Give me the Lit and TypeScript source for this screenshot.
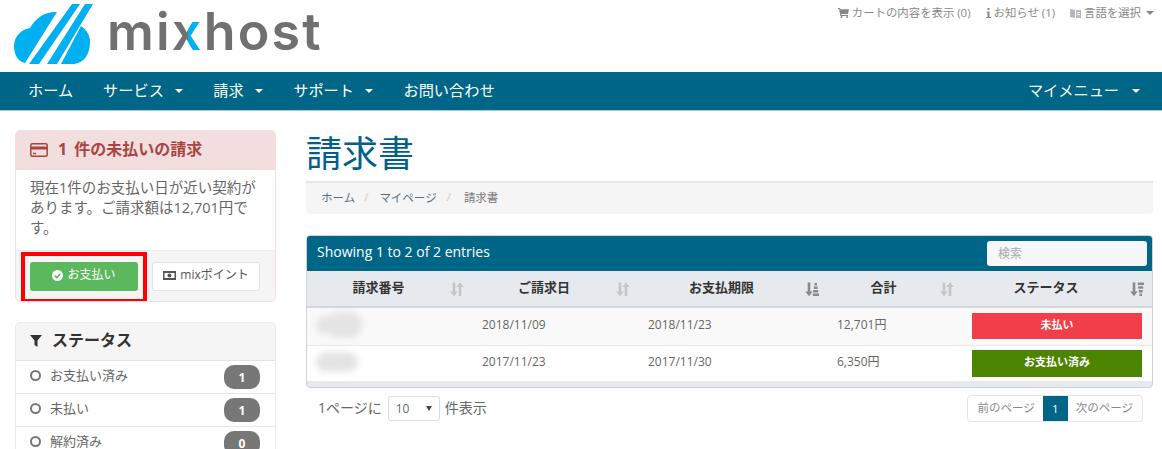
import { LitElement, html, css, svg } from "lit";
import { customElement } from "lit/decorators.js";

const caret = html`<i class="caret"></i>`;

const sortBoth = svg`<path d="M2.700 1.500h2.600v9h2.400L4 15.200.3 10.500h2.400z"/><path d="M11.300 15h-2.600V6H6.300L10 1.300 13.700 6h-2.400z"/>`;
const sortAsc = svg`<path d="M2.700 1.500h2.600v9h2.400L4 15.200.3 10.500h2.400z"/><path d="M9.500 2h2.500v2.500H9.500zM8.800 5.500h3.900v2.500H8.800zM8.200 9h5v2.500h-5zM7.800 12.500h6.200V15H7.800z"/>`;
const sortDesc = svg`<path d="M2.700 1.500h2.600v9h2.400L4 15.200.3 10.500h2.400z"/><path d="M7.800 1.500H14V4H7.800zM8.200 5.200h5v2.500h-5zM8.800 8.900h3.900v2.500H8.800zM9.500 12.500H12V15H9.500z"/>`;

@customElement("app-root")
export class AppRoot extends LitElement {
  static styles = css`
    :host {
      display: block;
      width: 1162px;
      height: 449px;
      overflow: hidden;
      background: #fff;
      font-family: "Open Sans", "Noto Sans CJK JP", sans-serif;
      font-size: 13px;
      color: #666;
    }
    * { box-sizing: border-box; }
    .top { height: 72px; display: flex; justify-content: space-between; align-items: flex-start; padding: 0 8px 0 14px; }
    .logo { display: flex; align-items: flex-start; padding-top: 2px; gap: 13px; }
    .logo svg { display: block; }
    .word { font-family: "Inter", sans-serif; font-weight: 600; font-size: 52px; line-height: 60px; letter-spacing: 2.2px; color: #707070; }
    .word b { font-weight: 600; background: linear-gradient(90deg, #707070 50%, #00b0f0 50%); -webkit-background-clip: text; background-clip: text; color: transparent; }
    .tools { display: flex; gap: 15px; font-size: 11.4px; line-height: 16px; color: #888; padding-top: 5px; }
    .tools span { display: flex; align-items: center; gap: 3px; }
    .tools svg { fill: #888; display: block; }
    .tools .caret { border-top-color: #888; margin-left: 2px; }

    .caret { display: inline-block; width: 0; height: 0; border-left: 4px solid transparent; border-right: 4px solid transparent; border-top: 4px solid #fff; }
    nav { height: 39px; background: #006687; color: #fff; display: flex; align-items: center; padding: 0 13px 5px; font-size: 15.2px; border-bottom: 1px solid #a9c9d6; }
    nav a { padding: 0 15px; display: flex; align-items: center; gap: 11.5px; }
    nav a .caret { margin-top: 4px; }
    nav .push { margin-left: auto; gap: 13px; margin-right: -6px; }

    .page { display: flex; gap: 30px; padding: 19px 9px 0 15px; align-items: flex-start; }
    aside { width: 261px; flex: none; display: flex; flex-direction: column; gap: 20px; }
    main { flex: 1; min-width: 0; }

    .panel { border: 1px solid #ebebeb; border-radius: 5px; overflow: hidden; }
    .panel.bad { border-color: #f2dede; }
    .ph { height: 39px; display: flex; align-items: center; padding: 0 0 6px 14px; font-size: 16px; font-weight: 700; gap: 10px; word-spacing: 3px; }
    .ph svg { margin-top: 5px; }
    .bad .ph { background: #f2dede; color: #a94442; }
    .pb { padding: 8px 14px 0; height: 80px; font-size: 14.5px; line-height: 20px; color: #666; }
    .pf { height: 51px; background: #f5f5f5; border-top: 1px solid #ebebeb; display: flex; align-items: center; padding-left: 14px; gap: 14px; }
    .btn { width: 108px; height: 29px; display: flex; align-items: center; justify-content: center; gap: 4px; border-radius: 3px; font-size: 12px; padding-bottom: 5px; }
    .btn svg { margin-top: 3px; }
    .btn.go { background: #5cb85c; color: #fff; }
    .btn.mix { background: #fff; border: 1px solid #e3e3e3; color: #555; }
    .hl { position: relative; display: block; }
    .hl::after { content: ""; position: absolute; left: -9px; right: -9px; top: -10px; bottom: -12px; border: 4px solid #f00; }

    .side-h { height: 38px; background: #f5f5f5; border-bottom: 1px solid #e3e3e3; display: flex; align-items: center; padding: 0 0 6px 14px; font-size: 16px; font-weight: 700; color: #333; gap: 10px; }
    .side-h svg { margin-top: 5px; }
    .opt { height: 33px; display: flex; align-items: center; padding: 0 15px 0 14px; border-bottom: 1px solid #e8e8e8; font-size: 13px; color: #666; }
    .opt em { font-style: normal; margin-top: -5px; }
    .opt .dot { width: 11px; height: 11px; border-radius: 50%; border: 2px solid #777; margin: -4px 9px 0 0; }
    .opt .n { margin-left: auto; width: 36px; height: 24px; border-radius: 10px; background: #777; color: #fff; font-size: 12px; font-weight: 700; display: flex; align-items: center; justify-content: center; }

    h1 { margin: 0; font-size: 36px; line-height: 47px; font-weight: 400; color: #00608a; height: 51px; }
    .crumb { height: 33px; background: #f5f5f5; border-top: 2px solid #e6e6e6; border-radius: 0 0 4px 4px; display: flex; align-items: center; padding: 0 0 4px 15px; font-size: 11.5px; color: #777; }
    .crumb a { color: #5a6f7c; }
    .crumb i { font-style: normal; color: #ccc; padding: 0 11px 0 9px; }
    .crumb a + i + a + i { padding: 0 13px 0 10px; }

    .tbl { margin-top: 21px; border: 1px solid #cfd3d6; border-radius: 4px; overflow: hidden; background: #e6eaee; }
    .tbar { height: 35px; background: #006687; color: #fff; display: flex; align-items: center; justify-content: space-between; padding: 0 5px 0 10px; font-size: 14px; }
    .tbar span { margin-top: -4px; }
    .search { width: 160px; height: 25px; background: #f6f7f8; border-radius: 3px; color: #aaa; font-size: 12px; display: flex; align-items: center; padding: 0 0 0 11px; margin-top: -1px; }
    table { width: 100%; border-collapse: collapse; table-layout: fixed; }
    th { height: 36px; padding: 0 8px 0 10px; background: #e6eaee; border-bottom: 2px solid #d3d7da; color: #333; font-size: 13px; font-weight: 700; }
    th div { display: flex; align-items: center; }
    th div span { flex: 1; text-align: center; margin: -5px 10px 0 0; }
    th svg { display: block; fill: #c4c6c8; }
    th svg.on { fill: #8a8a8a; }
    td { height: 38px; padding: 0 10px; font-size: 12px; color: #666; background: #fff; border-bottom: 1px solid #e8e8e8; }
    td.t { padding-bottom: 4px; }
    tr.odd td { background: #f9f9f9; }
    tr:last-child td { height: 36px; border-bottom: 0; }
    .blur { display: block; background: #e4e4e4; border-radius: 10px; filter: blur(3px); }
    .blur.two { width: 28px; height: 18px; box-shadow: 14px 0 0 4px #e4e4e4; margin: -2px 0 0 -1px; }
    .blur.one { width: 42px; height: 20px; margin: -3px 0 0 -1px; }
    .st { height: 26px; display: flex; align-items: center; justify-content: center; color: #fff; font-size: 11px; font-weight: 700; padding-bottom: 4px; }
    .st.r { background: #f03e4a; }
    .st.g { background: #4b8400; height: 27px; }
    .tfoot { height: 6px; }

    .below { display: flex; justify-content: space-between; align-items: center; padding: 7px 10px 0 12px; font-size: 14px; color: #666; }
    .len { display: flex; align-items: center; gap: 5px; }
    .len em { font-style: normal; margin-top: -3px; }
    .len em:first-child { margin-right: 1px; }
    .sel { width: 52px; height: 25px; border: 1px solid #ddd; border-radius: 3px; display: flex; align-items: center; justify-content: space-between; padding: 0 7px; font-size: 12px; color: #666; }
    .sel::after { content: ""; border-left: 3px solid transparent; border-right: 3px solid transparent; border-top: 5px solid #444; }
    .pag { display: flex; height: 27px; border: 1px solid #e6e6e6; border-radius: 4px; font-size: 11.5px; color: #888; }
    .pag span { display: flex; align-items: center; padding: 0 8px 3px 9px; }
    .pag span:last-child { padding: 0 9px 3px 8px; }
    .pag .cur { background: #006687; color: #fff; width: 25px; padding: 0; justify-content: center; }
  `;

  render() {
    return html`
      <div class="top">
        <div class="logo">
          <svg width="80" height="62" viewBox="14 0 80 62" fill="#00b0f0">
            <path d="M57 10 L25 61 C18 60 14 52 14 44 C14 34 22 27 30 26 C35 16 46 9 57 10Z" />
            <path d="M72 2h8L39 62h-10z" />
            <path d="M85 2h8L57 62H47z" />
            <path d="M81 24 C87 28 90 34 90 40 C90 52 84 61 74 62 L61 62Z" />
          </svg>
          <div class="word">mi<b>x</b>host</div>
        </div>
        <div class="tools">
          <span>
            <svg width="11" height="10" viewBox="0 0 11 10"><path d="M0 0h2l.4 1.200H11L10 6H3l.2 1H10v1H2.300L1.200 1H0z"/><circle cx="3.500" cy="9" r="1"/><circle cx="9" cy="9" r="1"/></svg>
            カートの内容を表示 (0)
          </span>
          <span>
            <svg width="5" height="10" viewBox="0 0 5 10"><path d="M1.500 0h2v2h-2zM.5 3.500h3V9H5v1H0V9h1.500V4.500h-1z"/></svg>
            お知らせ (1)
          </span>
          <span>
            <svg width="11" height="11" viewBox="0 0 11 11"><path d="M0 1l5 1v8L0 9zM6 2h5v8H6z" fill-opacity=".6"/><path d="M7 4h3v1H7zM7 6h3v1H7z" fill="#fff"/></svg>
            言語を選択 ${caret}
          </span>
        </div>
      </div>
      <nav>
        <a>ホーム</a>
        <a>サービス ${caret}</a>
        <a>請求 ${caret}</a>
        <a>サポート ${caret}</a>
        <a>お問い合わせ</a>
        <a class="push">マイメニュー ${caret}</a>
      </nav>
      <div class="page">
        <aside>
          <div class="panel bad">
            <div class="ph">
              <svg width="18" height="14" viewBox="0 0 18 14" fill="none" stroke="#a94442" stroke-width="1.500"><rect x=".8" y=".8" width="16.400" height="12.400" rx="1.500"/><path d="M1 5h16" stroke-width="3"/><path d="M3 10.500h3"/></svg>
              1 件の未払いの請求
            </div>
            <div class="pb">現在1件のお支払い日が近い契約があります。ご請求額は12,701円です。</div>
            <div class="pf">
              <a class="hl">
                <span class="btn go">
                  <svg width="11" height="11" viewBox="0 0 11 11"><circle cx="5.500" cy="5.500" r="5.500" fill="#fff"/><path d="M2.800 5.600l2 2 3.400-3.600" fill="none" stroke="#5cb85c" stroke-width="1.600"/></svg>
                  お支払い
                </span>
              </a>
              <a class="btn mix">
                <svg width="13" height="9" viewBox="0 0 13 9"><path fill="#555" fill-rule="evenodd" d="M0 0h13v9H0zM1.500 2v5h10V2z"/><circle cx="6.500" cy="4.500" r="2" fill="#555"/></svg>
                mixポイント
              </a>
            </div>
          </div>
          <div class="panel">
            <div class="side-h">
              <svg width="12" height="12" viewBox="0 0 12 12" fill="#333"><path d="M0 0h12L7.500 5.500V12l-3-2V5.500z"/></svg>
              ステータス
            </div>
            <div class="opt"><i class="dot"></i><em>お支払い済み</em><span class="n">1</span></div>
            <div class="opt"><i class="dot"></i><em>未払い</em><span class="n">1</span></div>
            <div class="opt"><i class="dot"></i><em>解約済み</em><span class="n">0</span></div>
          </div>
        </aside>
        <main>
          <h1>請求書</h1>
          <div class="crumb"><a>ホーム</a><i>/</i><a>マイページ</a><i>/</i>請求書</div>
          <div class="tbl">
            <div class="tbar"><span>Showing 1 to 2 of 2 entries</span><div class="search">検索</div></div>
            <table>
              <colgroup><col style="width:165px" /><col style="width:166px" /><col style="width:189px" /><col style="width:135px" /><col /></colgroup>
              <thead>
                <tr>
                  <th><div><span>請求番号</span><svg width="14" height="16" viewBox="0 0 14 16">${sortBoth}</svg></div></th>
                  <th><div><span>ご請求日</span><svg width="14" height="16" viewBox="0 0 14 16">${sortBoth}</svg></div></th>
                  <th><div><span>お支払期限</span><svg class="on" width="14" height="16" viewBox="0 0 14 16">${sortAsc}</svg></div></th>
                  <th><div><span>合計</span><svg width="14" height="16" viewBox="0 0 14 16">${sortBoth}</svg></div></th>
                  <th><div><span>ステータス</span><svg class="on" width="14" height="16" viewBox="0 0 14 16">${sortDesc}</svg></div></th>
                </tr>
              </thead>
              <tbody>
                <tr class="odd">
                  <td><span class="blur two"></span></td>
                  <td class="t">2018/11/09</td><td class="t">2018/11/23</td><td class="t">12,701円</td>
                  <td><div class="st r">未払い</div></td>
                </tr>
                <tr>
                  <td><span class="blur one"></span></td>
                  <td class="t">2017/11/23</td><td class="t">2017/11/30</td><td class="t">6,350円</td>
                  <td><div class="st g">お支払い済み</div></td>
                </tr>
              </tbody>
            </table>
            <div class="tfoot"></div>
          </div>
          <div class="below">
            <div class="len"><em>1ページに</em><div class="sel">10</div><em>件表示</em></div>
            <div class="pag"><span>前のページ</span><span class="cur">1</span><span>次のページ</span></div>
          </div>
        </main>
      </div>
    `;
  }
}
